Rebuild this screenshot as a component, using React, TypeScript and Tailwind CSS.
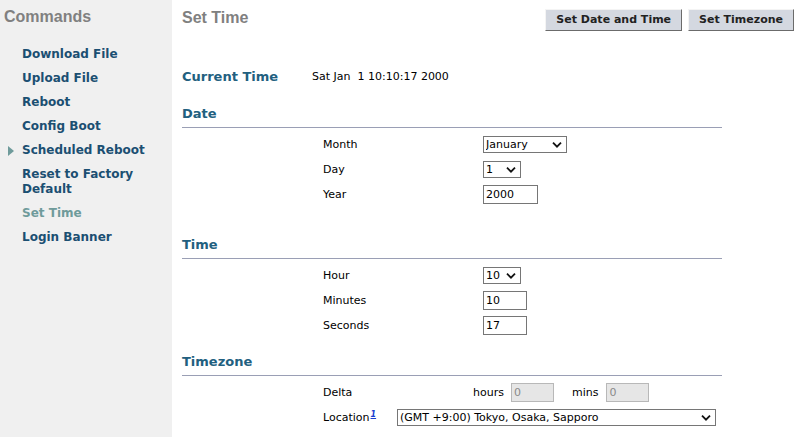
import React from 'react';

const MENU = [
  { label: 'Download File' },
  { label: 'Upload File' },
  { label: 'Reboot' },
  { label: 'Config Boot' },
  { label: 'Scheduled Reboot', arrow: true },
  { label: 'Reset to Factory Default' },
  { label: 'Set Time', active: true },
  { label: 'Login Banner' },
];

const MONTHS = ['January', 'February', 'March', 'April', 'May', 'June', 'July', 'August', 'September', 'October', 'November', 'December'];

function Chevron() {
  return (
    <svg width="10" height="7" viewBox="0 0 10 7" className="pointer-events-none absolute right-[5px] top-1/2 -translate-y-1/2">
      <path d="M1 1.2 L5 5.2 L9 1.2" fill="none" stroke="#111" strokeWidth="1.8" />
    </svg>
  );
}

function Select({ value, options, width }: { value: string; options: string[]; width: string }) {
  return (
    <div className={`relative h-[17px] ${width}`}>
      <select
        defaultValue={value}
        className="block h-[17px] w-full appearance-none border border-[#767676] bg-white pl-[2px] pr-4 text-[11px] leading-[15px] text-black outline-none"
        style={{ fontFamily: '"DejaVu Sans", Verdana, sans-serif' }}
      >
        {options.map((o) => (
          <option key={o}>{o}</option>
        ))}
      </select>
      <Chevron />
    </div>
  );
}

function TextBox({ value, width, disabled }: { value: string; width: string; disabled?: boolean }) {
  return (
    <input
      defaultValue={value}
      disabled={disabled}
      className={`block h-[19px] ${width} border px-[2px] text-[11px] outline-none ${
        disabled ? 'border-[#b8b8b8] bg-[#e6e6e6] text-[#8a8a8a]' : 'border-[#767676] bg-white text-black'
      }`}
      style={{ fontFamily: '"DejaVu Sans", Verdana, sans-serif' }}
    />
  );
}

function SectionHead({ title, className }: { title: string; className: string }) {
  return (
    <div className={`flex h-[25px] w-[540px] items-end border-b border-[#9a9fb5] pb-[5px] ${className}`}>
      <span className="text-[13px] font-bold leading-[16px] text-[#22607f]">{title}</span>
    </div>
  );
}

function Row({ label, children }: { label: React.ReactNode; children: React.ReactNode }) {
  return (
    <div className="flex h-[25px] items-center pl-[141px]">
      <div className="w-[160px] text-[11px] leading-[14px] text-black">{label}</div>
      {children}
    </div>
  );
}

export default function App() {
  return (
    <div className="flex min-h-[437px] w-[798px] bg-white" style={{ fontFamily: '"DejaVu Sans", Verdana, sans-serif' }}>
      {/* Sidebar */}
      <div className="w-[172px] shrink-0 bg-[#f0f0f0] pt-[9px]">
        <div className="pl-[4px] text-[16px] font-bold leading-[16px] text-[#808080]" style={{ fontFamily: '"Liberation Sans", Arial, sans-serif' }}>
          Commands
        </div>
        <div className="mt-[22px] flex flex-col gap-[9px]">
          {MENU.map((m) => (
            <div
              key={m.label}
              className={`relative pl-[22px] pr-2 text-[12px] font-bold leading-[15px] ${m.active ? 'text-[#6f9b9b]' : 'text-[#1b4f72]'}`}
            >
              {m.arrow && (
                <svg width="6" height="10" viewBox="0 0 6 10" className="absolute left-[8px] top-[3px]">
                  <path d="M0 0 L6 5 L0 10 Z" fill="#6f9b9b" />
                </svg>
              )}
              {m.label}
            </div>
          ))}
        </div>
      </div>

      {/* Main */}
      <div className="flex-1 pl-[10px]">
        <div className="flex h-[37px] items-start justify-between">
          <div className="pt-[9px] text-[16px] font-bold leading-[18px] text-[#808080]" style={{ fontFamily: '"Liberation Sans", Arial, sans-serif' }}>
            Set Time
          </div>
          <div className="flex gap-[6px] pr-[4px] pt-[9px]">
            <button className="h-[22px] border border-b-[#6b6b6b] border-l-[#f4f4f4] border-r-[#6b6b6b] border-t-[#f4f4f4] bg-[#d4d8e0] px-[10px] text-[11px] font-bold text-[#222]">
              Set Date and Time
            </button>
            <button className="h-[22px] border border-b-[#6b6b6b] border-l-[#f4f4f4] border-r-[#6b6b6b] border-t-[#f4f4f4] bg-[#d4d8e0] px-[10px] text-[11px] font-bold text-[#222]">
              Set Timezone
            </button>
          </div>
        </div>

        <div className="mt-[28px] flex h-[24px] items-center">
          <div className="w-[130px] text-[13px] font-bold text-[#22607f]">Current Time</div>
          <div className="whitespace-pre text-[11px] text-black">Sat Jan  1 10:10:17 2000</div>
        </div>

        <SectionHead title="Date" className="mt-[14px]" />
        <div className="mt-[4px]">
          <Row label="Month">
            <Select value="January" options={MONTHS} width="w-[84px]" />
          </Row>
          <Row label="Day">
            <Select value="1" options={Array.from({ length: 31 }, (_, i) => String(i + 1))} width="w-[38px]" />
          </Row>
          <Row label="Year">
            <TextBox value="2000" width="w-[55px]" />
          </Row>
        </div>

        <SectionHead title="Time" className="mt-[27px]" />
        <div className="mt-[4px]">
          <Row label="Hour">
            <Select value="10" options={Array.from({ length: 24 }, (_, i) => String(i))} width="w-[38px]" />
          </Row>
          <Row label="Minutes">
            <TextBox value="10" width="w-[44px]" />
          </Row>
          <Row label="Seconds">
            <TextBox value="17" width="w-[44px]" />
          </Row>
        </div>

        <SectionHead title="Timezone" className="mt-[13px]" />
        <div className="mt-[4px]">
          <div className="flex h-[25px] items-center pl-[141px] text-[11px] leading-[14px] text-black">
            <div className="w-[150px]">Delta</div>
            <span className="mr-[7px]">hours</span>
            <TextBox value="0" width="w-[43px]" disabled />
            <span className="ml-[18px] mr-[8px]">mins</span>
            <TextBox value="0" width="w-[43px]" disabled />
          </div>
          <div className="flex h-[25px] items-center pl-[141px] text-[11px] leading-[14px] text-black">
            <div className="w-[74px]">
              Location
              <sup className="ml-[1px] text-[8px] font-bold italic text-[#1a3fd0] underline">1</sup>
            </div>
            <Select value="(GMT +9:00) Tokyo, Osaka, Sapporo" options={['(GMT +9:00) Tokyo, Osaka, Sapporo']} width="w-[319px]" />
          </div>
        </div>
      </div>
    </div>
  );
}
